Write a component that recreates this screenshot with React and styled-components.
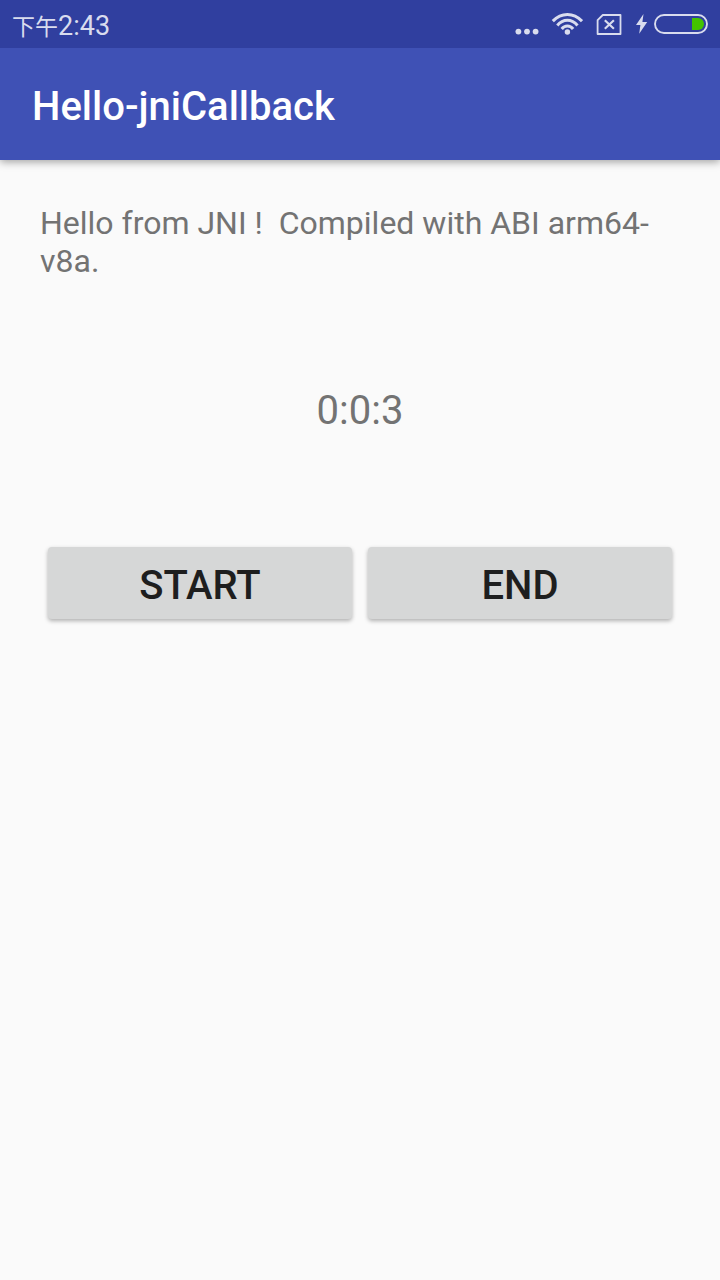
import React from "react";
import styled, { createGlobalStyle } from "styled-components";

const GlobalStyle = createGlobalStyle`
  *, *::before, *::after { box-sizing: border-box; }
  body {
    margin: 0;
    background: #fafafa;
    font-family: Roboto, "Noto Sans CJK SC", sans-serif;
  }
`;

const Screen = styled.div`
  min-height: 100vh;
  background: #fafafa;
`;

const StatusBar = styled.div`
  position: relative;
  z-index: 1;
  display: flex;
  align-items: center;
  justify-content: space-between;
  height: 48px;
  padding: 0 12px;
  background: #303f9f;
  color: #d9dcee;
`;

const Clock = styled.time`
  display: flex;
  align-items: baseline;
  padding-top: 2px;
  font-size: 27px;
  line-height: 48px;
`;

const Period = styled.span`
  font-family: "Noto Sans CJK SC", sans-serif;
  font-size: 23px;
`;

const StatusIcons = styled.div`
  display: flex;
  align-items: center;
`;

const Indicator = styled.svg`
  display: block;
  flex: none;
  width: ${(p) => p.$width}px;
  height: 48px;
  margin-left: ${(p) => p.$gap || 0}px;
`;

const AppBar = styled.header`
  display: flex;
  align-items: center;
  height: 112px;
  padding: 6px 32px 0;
  background: #3f51b5;
  box-shadow: 0 2px 8px rgba(0, 0, 0, 0.36);
`;

const Title = styled.h1`
  margin: 0;
  color: #fff;
  font-size: 40px;
  font-weight: 500;
  line-height: 48px;
`;

const Content = styled.main`
  padding: 44px 40px;
  color: #737373;
`;

const Message = styled.p`
  margin: 0;
  font-size: 32px;
  line-height: 38px;
  white-space: pre-wrap;
`;

const Timer = styled.output`
  display: block;
  margin: 107px 0 112px;
  font-size: 40px;
  line-height: 48px;
  text-align: center;
`;

const Actions = styled.div`
  display: flex;
  gap: 16px;
  padding: 0 8px;
`;

const ActionButton = styled.button`
  flex: 1;
  height: 72px;
  padding: 6px 16px 0;
  border: 0;
  border-radius: 4px;
  background: #d6d7d7;
  box-shadow: 0 2px 4px rgba(0, 0, 0, 0.3);
  color: #1e1e1e;
  font-family: inherit;
  font-size: 40px;
  font-weight: 500;
  line-height: 48px;
  text-transform: uppercase;
  cursor: pointer;

  &:active { background: #c4c6c6; }
`;

function Signal() {
  return (
    <Indicator $width={24} viewBox="0 0 24 48" fill="#d9dcee" aria-hidden="true">
      <circle cx="3.4" cy="31.6" r="2.9" />
      <circle cx="12" cy="31.6" r="2.9" />
      <circle cx="20.6" cy="31.6" r="2.9" />
    </Indicator>
  );
}

function Wifi() {
  return (
    <Indicator $width={32} $gap={12} viewBox="0 0 32 48" fill="none" stroke="#d9dcee" strokeWidth="3" aria-hidden="true">
      <path d="M1.8 21.1Q8.2 14.4 16.4 14.4T31 21.1" />
      <path d="M6.3 25.5Q10.6 20.3 16.4 20.3T26.5 25.5" />
      <path d="M10.7 29Q13 26 16.4 26T22.1 29" />
      <circle cx="16.4" cy="32" r="2.7" fill="#d9dcee" stroke="none" />
    </Indicator>
  );
}

function SimCard() {
  return (
    <Indicator $width={26} $gap={13} viewBox="0 0 26 48" fill="none" stroke="#d9dcee" aria-hidden="true">
      <path d="M6.8 15H24.5V34H1.6V20.2Z" strokeWidth="1.8" strokeLinejoin="round" />
      <path d="M8.8 20.3L17.9 28.7M17.9 20.3L8.8 28.7" strokeWidth="2.2" />
    </Indicator>
  );
}

function Charging() {
  return (
    <Indicator $width={12} $gap={14} viewBox="0 0 12 48" fill="#d9dcee" aria-hidden="true">
      <path d="M7.5 14L0 25H4.4L3.2 33.8L11.2 22H6.4Z" />
    </Indicator>
  );
}

function Battery() {
  return (
    <Indicator $width={54} $gap={6} viewBox="0 0 54 48" fill="none" aria-hidden="true">
      <rect x="1" y="15" width="52" height="18" rx="9" stroke="#d9dcee" strokeWidth="1.9" />
      <path d="M38 18H44A6 6 0 0 1 44 30H38Z" fill="#43c300" />
    </Indicator>
  );
}

export default function App() {
  return (
    <Screen>
      <GlobalStyle />
      <StatusBar>
        <Clock dateTime="14:43">
          <Period>下午</Period>2:43
        </Clock>
        <StatusIcons>
          <Signal />
          <Wifi />
          <SimCard />
          <Charging />
          <Battery />
        </StatusIcons>
      </StatusBar>
      <AppBar>
        <Title>Hello-jniCallback</Title>
      </AppBar>
      <Content>
        <Message>{"Hello from JNI !  Compiled with ABI arm64-v8a."}</Message>
        <Timer>0:0:3</Timer>
        <Actions>
          <ActionButton type="button">Start</ActionButton>
          <ActionButton type="button">End</ActionButton>
        </Actions>
      </Content>
    </Screen>
  );
}
